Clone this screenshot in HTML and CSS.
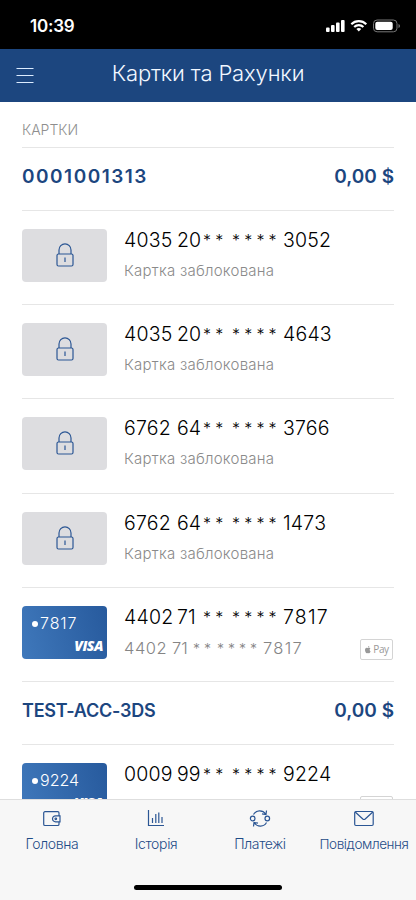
FILE: index.html
```
<!DOCTYPE html>
<html lang="uk">
<head>
<meta charset="utf-8">
<title>Картки та Рахунки</title>
<link rel="stylesheet" href="styles.css">
</head>
<body>
<svg class="defs" width="0" height="0">
  <symbol id="lock" viewBox="0 0 18 24"><path d="M3 11V7a6 6.2 0 0 1 12 0v4"/><rect x="1" y="11" width="16" height="12" rx="1.500"/><path d="M9 14.500v4.500"/></symbol>
  <symbol id="apple" viewBox="0 0 24 24"><path d="M17 12.600c0-2.500 2-3.700 2.200-3.800-1.200-1.700-3-2-3.700-2-1.600-.1-3 .9-3.800.9s-2-.9-3.300-.9C4.500 6.900 3 10 3 13.200 3 17.500 6 23 8.600 23c1.200 0 1.800-.8 3.300-.8s2 .8 3.300.8c2.100 0 4.200-4.200 4.700-5.800-.1 0-2.900-1.200-2.900-4.600zM14.500 5c.9-1 1.200-2.400 1.100-3.700-2.300.3-4.300 2.200-4 4.600 1.200 0 2.200-.2 2.900-.9z"/></symbol>
</svg>
<div class="phone">
  <div class="status">
    <span class="time">10:39</span>
    <svg class="signals" width="76" height="16" viewBox="0 0 76 16">
      <g fill="#fff"><rect x="0" y="9.500" width="3.600" height="4.500" rx="1"/><rect x="5" y="7" width="3.600" height="7" rx="1"/><rect x="10" y="4.500" width="3.600" height="9.500" rx="1"/><rect x="15" y="2" width="3.600" height="12" rx="1"/></g>
      <g fill="none" stroke="#fff" stroke-width="2.100"><path d="M25.300 6.200a10.600 10.600 0 0 1 15 0"/><path d="M28.200 9.100a6.400 6.400 0 0 1 9.200 0"/></g>
      <path d="M32.800 10.100q-1.600 0-2.400 1l2.400 2.500 2.400-2.500q-.8-1-2.400-1z" fill="#fff"/>
      <rect x="47.500" y="2" width="23.500" height="11.800" rx="3.600" fill="none" stroke="#777"/>
      <rect x="49.300" y="3.800" width="17.400" height="8.200" rx="2" fill="#fff"/>
      <path d="M72.500 6v4q1.500-.6 1.500-2t-1.500-2z" fill="#777"/>
    </svg>
  </div>
  <header class="header">
    <svg class="menu" width="18" height="17" viewBox="0 0 18 17"><path d="M.5 1.500h17M.5 8.500h17M.5 15.500h17"/></svg>
    <h1 class="title">Картки та Рахунки</h1>
  </header>
  <main class="content">
    <h2 class="section">КАРТКИ</h2>
    <div class="account"><span class="acc-number">0001001313</span><span class="amount">0,00 $</span></div>
    <div class="row">
      <div class="card locked"><svg class="lock"><use href="#lock"/></svg></div>
      <div class="info"><div class="num"><span class="g4">4035</span> <span class="g2">20</span><span class="s2">**</span> <span class="s4">****</span> <span class="g4">3052</span></div><div class="sub">Картка заблокована</div></div>
    </div>
    <div class="row">
      <div class="card locked"><svg class="lock"><use href="#lock"/></svg></div>
      <div class="info"><div class="num"><span class="g4">4035</span> <span class="g2">20</span><span class="s2">**</span> <span class="s4">****</span> <span class="g4">4643</span></div><div class="sub">Картка заблокована</div></div>
    </div>
    <div class="row">
      <div class="card locked"><svg class="lock"><use href="#lock"/></svg></div>
      <div class="info"><div class="num"><span class="g4">6762</span> <span class="g2">64</span><span class="s2">**</span> <span class="s4">****</span> <span class="g4">3766</span></div><div class="sub">Картка заблокована</div></div>
    </div>
    <div class="row">
      <div class="card locked"><svg class="lock"><use href="#lock"/></svg></div>
      <div class="info"><div class="num"><span class="g4">6762</span> <span class="g2">64</span><span class="s2">**</span> <span class="s4">****</span> <span class="g4">1473</span></div><div class="sub">Картка заблокована</div></div>
    </div>
    <div class="row">
      <div class="card visa"><span class="tail spaced"><i class="dot"></i>7817</span><span class="brand">VISA</span></div>
      <div class="info"><div class="num"><span class="g4">4402</span> <span class="g2">71</span><span class="s2">**</span> <span class="s4">****</span> <span class="g4 spaced">7817</span></div>
      <div class="num small"><span class="g4">4402</span> <span class="g2">71</span><span class="s2">**</span> <span class="s4">****</span> <span class="g4 spaced">7817</span></div></div>
      <span class="pay"><svg class="apple"><use href="#apple"/></svg>Pay</span>
    </div>
    <div class="account"><span class="acc-number name">TEST-ACC-3DS</span><span class="amount">0,00 $</span></div>
    <div class="row">
      <div class="card visa"><span class="tail"><i class="dot"></i>9224</span><span class="brand">VISA</span></div>
      <div class="info"><div class="num"><span class="g4">0009</span> <span class="g2">99</span><span class="s2">**</span> <span class="s4">****</span> <span class="g4">9224</span></div>
      <div class="num small"><span class="g4">0009</span> <span class="g2">99</span><span class="s2">**</span> <span class="s4">****</span> <span class="g4">9224</span></div></div>
      <span class="pay"><svg class="apple"><use href="#apple"/></svg>Pay</span>
    </div>
  </main>
  <nav class="tabs">
    <div class="tab"><svg width="24" height="20" viewBox="0 0 24 20"><path d="M19 6.800V4a1.300 1.300 0 0 0-1.300-1.300H5A1.300 1.300 0 0 0 3.700 4v11.200a1.300 1.300 0 0 0 1.300 1.300h12.700a1.300 1.300 0 0 0 1.300-1.300v-2.400M20 6.800h-4.500a3 3 0 0 0 0 6H20z"/><circle cx="15.800" cy="9.800" r=".8"/></svg><span>Головна</span></div>
    <div class="tab"><svg width="24" height="20" viewBox="0 0 24 20"><path d="M4.500 1v15.500H20M8.500 14V9M11.800 14V5M14.800 14V3.500M18 14V8"/></svg><span>Історія</span></div>
    <div class="tab"><svg width="24" height="20" viewBox="0 0 24 20"><circle cx="4.700" cy="9.500" r="2.300"/><circle cx="19.300" cy="9.500" r="2.300"/><path d="M5.500 5.500C8 1 14.500.5 17.700 5M18.500 1.500L18 5.500l-4-.7M18.500 13.500C16 18 9.500 18.500 6.300 14M5.500 17.500L6 13.500l4 .7"/></svg><span>Платежі</span></div>
    <div class="tab"><svg width="24" height="20" viewBox="0 0 24 20"><rect x="2.700" y="2.500" width="18.500" height="14" rx="1.200"/><path d="M3.200 3l7.600 7q1.200 1 2.400 0l7.600-7"/></svg><span class="long">Повідомлення</span></div>
    <div class="home"></div>
  </nav>
</div>
</body>
</html>
```
FILE: styles.css
```
* { box-sizing: border-box; }
body { margin: 0; background: #fff; font-family: Inter, "Liberation Sans", sans-serif; }
.defs { position: absolute; }
.phone { width: 416px; height: 900px; display: flex; flex-direction: column; overflow: hidden; }
.status { height: 49px; flex: none; background: #000; color: #fff; display: flex; justify-content: space-between; padding: 16px 14px 0 30px; }
.time { font-size: 17px; line-height: 20px; font-weight: 600; letter-spacing: -.2px; }
.signals { margin-top: 2px; }
.header { height: 53px; flex: none; background: #1c467f; display: grid; grid-template-columns: 18px 1fr 18px; align-items: center; padding: 0 16px; }
.menu { stroke: #dcecff; stroke-width: 1.2; }
.title { margin: -5px 0 0; color: #f2f8ff; font-size: 22px; line-height: 30px; font-weight: 300; letter-spacing: -.15px; text-align: center; white-space: nowrap; }
.content { flex: 1; min-height: 0; overflow: hidden; padding: 0 22px; }
.section { margin: 0; height: 46px; padding-top: 19px; font-size: 14px; line-height: 18px; font-weight: 300; color: #8e8e8e; border-bottom: 1px solid #e6e6e6; }
.account { height: 63px; display: flex; justify-content: space-between; color: #1c467f; font-size: 19px; line-height: 24px; font-weight: 600; padding-top: 17px; border-bottom: 1px solid #e6e6e6; }
.acc-number { letter-spacing: 1.500px; }
.name { font-size: 18px; letter-spacing: -.25px; }
.row { height: 94.200px; display: flex; padding-top: 18px; border-bottom: 1px solid #e6e6e6; }
.card { width: 85px; height: 53px; flex: none; border-radius: 4px; }
.locked { background: #dddde0; display: flex; justify-content: center; padding-top: 14px; }
.lock { width: 18px; height: 24px; fill: none; stroke: #2b5694; stroke-width: 1.2; }
.visa { background: linear-gradient(75deg, #3f78bb, #275a9d); color: #fff; display: flex; flex-direction: column; justify-content: space-between; padding: 8px 4px 4px 10px; }
.tail { display: flex; align-items: center; font-size: 16px; line-height: 19px; font-weight: 300; }
.tail.spaced { letter-spacing: .9px; }
.dot { width: 6px; height: 6px; margin: 2px 2px 0 0; border-radius: 50%; background: #fff; }
.brand { align-self: flex-end; font: italic 800 14px/18px "Open Sans", sans-serif; letter-spacing: -.5px; }
.info { flex: 1; padding-left: 17px; }
.num { height: 24px; margin-top: -1px; display: flex; font-size: 19.500px; line-height: 24px; font-weight: 300; color: #000; white-space: nowrap; }
.num span { flex: none; }
.g4 { width: 53px; letter-spacing: .2px; }
.num .g4.spaced { letter-spacing: 1.200px; }
.g2 { width: 26px; }
.num .s2, .num .s4 { font-size: 16px; line-height: 24px; letter-spacing: 4.200px; }
.s2 { width: 29px; }
.s4 { width: 51px; }
.sub { margin-top: 10px; font-size: 15px; line-height: 18px; font-weight: 300; letter-spacing: .25px; color: #8a8a8a; }
.small { margin-top: 7px; font-size: 16.500px; color: #858585; }
.small .g4 { width: 48px; letter-spacing: .5px; }
.num.small .g4.spaced { letter-spacing: 1.300px; }
.small .g2 { width: 21px; }
.num.small .s2, .num.small .s4 { font-size: 14px; line-height: 25px; letter-spacing: 4px; }
.small .s2 { width: 24px; }
.small .s4 { width: 46px; }
.pay { width: 33px; height: 21px; margin: 33px 1px 0 0; flex: none; border: 1px solid #d4d4d4; border-radius: 2px; display: flex; align-items: center; justify-content: center; gap: 1px; color: #999; font: 400 10px/18px "Open Sans", sans-serif; letter-spacing: -.4px; }
.apple { width: 8px; height: 9px; fill: #999; }
.tabs { height: 101px; flex: none; display: grid; grid-template-columns: repeat(4, 104px); grid-template-rows: 85px 6px; background: #f7f7f7; border-top: 1px solid #dedede; }
.tab { display: flex; flex-direction: column; align-items: center; padding-top: 9px; color: #1f4c87; font-size: 14px; line-height: 18px; font-weight: 300; letter-spacing: -.35px; white-space: nowrap; }
.tab svg { fill: none; stroke: #2b5694; stroke-width: 1.2; }
.tab span { margin-top: 6px; }
.tab .long { font-size: 13.500px; letter-spacing: -.4px; }
.home { grid-column: 1 / -1; width: 148px; height: 5px; justify-self: center; border-radius: 3px; background: #000; }
```
